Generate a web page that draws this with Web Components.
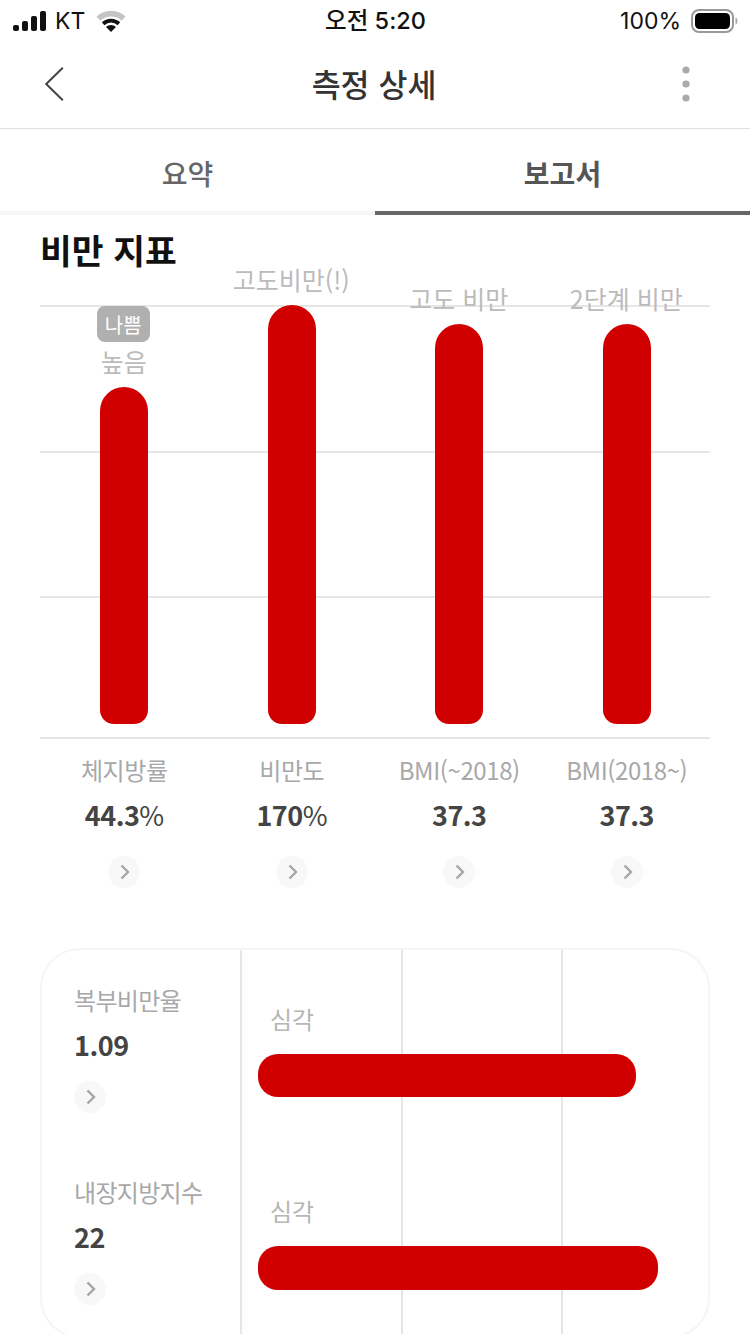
<!DOCTYPE html>
<html lang="ko">
<head>
<meta charset="utf-8">
<title>측정 상세</title>
<style>
	html, body {
		margin: 0;
		padding: 0;
		background: #fff;
		height: 1334px;
		overflow: hidden;
		font-family: "Noto Sans CJK KR", "Noto Sans", sans-serif;
	}
</style>
</head>
<body>
<status-bar></status-bar>
<nav-header>측정 상세</nav-header>
<tab-bar></tab-bar>
<index-chart heading="비만 지표">
	<chart-column top="387" note="높음" badge="나쁨" name="체지방률" value="44.3" unit="%"></chart-column>
	<chart-column top="305" note="고도비만(!)" name="비만도" value="170" unit="%"></chart-column>
	<chart-column top="324" note="고도 비만" name="BMI(~2018)" value="37.3"></chart-column>
	<chart-column top="324" note="2단계 비만" name="BMI(2018~)" value="37.3"></chart-column>
</index-chart>
<range-card>
	<range-row name="복부비만율" value="1.09" note="심각" width="378" thick="43"></range-row>
	<range-row name="내장지방지수" value="22" note="심각" width="400" thick="44"></range-row>
</range-card>

<script>
class StatusBar extends HTMLElement {
	constructor() {
		super();
		this.attachShadow({ mode: "open" });
	}

	connectedCallback() {
		this.shadowRoot.innerHTML = `
			<style>
				:host {
					display: grid;
					grid-template-columns: 1fr auto 1fr;
					align-items: center;
					height: 41px;
					padding: 0 12px 1px 13px;
					font-family: Inter, "Noto Sans CJK KR", sans-serif;
					font-size: 23px;
					color: #111;
				}
				.left, .right { display: flex; align-items: center; }
				.right { justify-content: flex-end; }
				.carrier { margin: 0 11px 0 9px; }
				.clock { font-weight: 500; font-size: 23.5px; margin-bottom: 3px; }
				.pct { margin-right: 10px; }
				svg { display: block; }
			</style>
			<div class="left">
				<svg width="33" height="20" viewBox="0 0 33 20">
					<rect x="0" y="14" width="6" height="6" rx="2" fill="#111"/>
					<rect x="9" y="10" width="6" height="10" rx="2" fill="#111"/>
					<rect x="18" y="5" width="6" height="15" rx="2" fill="#111"/>
					<rect x="27" y="0" width="6" height="20" rx="2" fill="#111"/>
				</svg>
				<span class="carrier">KT</span>
				<svg width="30" height="22" viewBox="0 0 30 22">
					<path d="M0.5 6.6 A21 21 0 0 1 29.5 6.6 L25.6 10.8 A15.5 15.5 0 0 0 4.4 10.8 Z" fill="#c4c4c4"/>
					<path d="M5.8 12.3 A13.5 13.5 0 0 1 24.2 12.3 L21.6 15.2 A9.6 9.6 0 0 0 8.4 15.2 Z" fill="#111"/>
					<path d="M10 17 A7.2 7.2 0 0 1 20 17 L15 22 Z" fill="#111"/>
				</svg>
			</div>
			<div class="clock">오전 5:20</div>
			<div class="right">
				<span class="pct">100%</span>
				<svg width="47" height="24" viewBox="0 0 47 24">
					<rect x="1" y="1" width="41" height="22" rx="7" fill="none" stroke="#999" stroke-width="2"/>
					<rect x="4" y="4" width="35" height="16" rx="4.5" fill="#000"/>
					<path d="M44.5 8.5 C46 9 46.5 10.5 46.5 12 C46.5 13.5 46 15 44.5 15.5 Z" fill="#aaa"/>
				</svg>
			</div>
		`;
	}
}

class NavHeader extends HTMLElement {
	constructor() {
		super();
		this.attachShadow({ mode: "open" });
	}

	connectedCallback() {
		this.shadowRoot.innerHTML = `
			<style>
				:host {
					display: flex;
					align-items: center;
					justify-content: space-between;
					height: 84px;
					padding: 0 60px 2px 45px;
					border-bottom: 1px solid #e0e0e0;
				}
				.title {
					font-size: 31.5px;
					font-weight: 500;
					color: #333;
					line-height: 40px;
					padding: 0 0 2px 2px;
				}
				svg { display: block; }
			</style>
			<svg width="19" height="34" viewBox="0 0 19 34">
				<path d="M17.8 0.7 L1.2 17 L17.8 33.3" fill="none" stroke="#444" stroke-width="2"/>
			</svg>
			<div class="title"><slot></slot></div>
			<svg width="8" height="36" viewBox="0 0 8 36">
				<circle cx="4" cy="4" r="3.6" fill="#aaa"/>
				<circle cx="4" cy="18" r="3.6" fill="#aaa"/>
				<circle cx="4" cy="32" r="3.6" fill="#aaa"/>
			</svg>
		`;
	}
}

class TabBar extends HTMLElement {
	constructor() {
		super();
		this.attachShadow({ mode: "open" });
	}

	connectedCallback() {
		this.shadowRoot.innerHTML = `
			<style>
				:host {
					display: grid;
					grid-template-columns: 1fr 1fr;
					height: 86px;
				}
				.tab {
					display: flex;
					align-items: center;
					justify-content: center;
					box-sizing: border-box;
					padding-top: 6px;
					font-size: 28px;
					font-weight: 500;
					color: #666;
					border-bottom: 4px solid #f6f6f6;
				}
				.active {
					font-weight: 700;
					color: #555;
					border-bottom-color: #666;
				}
			</style>
			<div class="tab">요약</div>
			<div class="tab active">보고서</div>
		`;
	}
}

class ChevronButton extends HTMLElement {
	constructor() {
		super();
		this.attachShadow({ mode: "open" });
	}

	connectedCallback() {
		this.shadowRoot.innerHTML = `
			<style>
				:host {
					display: flex;
					align-items: center;
					justify-content: center;
					width: 32px;
					height: 32px;
					border-radius: 50%;
					background: #f8f8f8;
				}
				svg { display: block; margin-left: 2px; }
			</style>
			<svg width="10" height="16" viewBox="0 0 10 16">
				<path d="M1.5 1.5 L8 8 L1.5 14.5" fill="none" stroke="#a5a5a5" stroke-width="2.4"/>
			</svg>
		`;
	}
}

class ChartColumn extends HTMLElement {
	constructor() {
		super();
		this.attachShadow({ mode: "open" });
	}

	connectedCallback() {
		const top = Number(this.getAttribute("top"));
		const badge = this.getAttribute("badge");
		this.shadowRoot.innerHTML = `
			<style>
				:host {
					display: flex;
					flex-direction: column;
					align-items: center;
					justify-content: flex-end;
					padding-left: 1px;
					min-height: 0;
				}
				.badge {
					display: flex;
					flex: none;
					align-items: center;
					justify-content: center;
					width: 53px;
					height: 36px;
					border-radius: 8px;
					background: #b0b0b0;
					color: #fff;
					font-size: 20px;
					margin: 0 2px 2px 0;
				}
				.note {
					flex: none;
					font-size: 25px;
					line-height: 34px;
					color: #bbb;
					white-space: nowrap;
					margin: 0 1px 9px 0;
				}
				.bar {
					flex: none;
					width: 48px;
					height: ${724 - top}px;
					background: #d00000;
					border-radius: 24px 24px 14px 14px;
				}
			</style>
			${badge ? `<div class="badge">${badge}</div>` : ""}
			<div class="note">${this.getAttribute("note")}</div>
			<div class="bar"></div>
		`;
	}
}

class IndexChart extends HTMLElement {
	constructor() {
		super();
		this.attachShadow({ mode: "open" });
	}

	connectedCallback() {
		const columns = [...this.querySelectorAll("chart-column")];
		const unitOf = (c) => c.getAttribute("unit") || "";
		const foot = columns.map((c) => `
			<div class="foot">
				<div class="name">${c.getAttribute("name")}</div>
				<div class="value">${c.getAttribute("value")}<span class="unit">${unitOf(c)}</span></div>
				<chevron-button></chevron-button>
			</div>
		`).join("");
		this.shadowRoot.innerHTML = `
			<style>
				:host {
					display: block;
					padding: 0 40px;
				}
				h2 {
					margin: 0;
					font-size: 34.5px;
					font-weight: 700;
					line-height: 46px;
					color: #111;
					padding-top: 11px;
				}
				.plot {
					position: relative;
					height: 418px;
					margin-top: 34px;
					padding-bottom: 13px;
					display: grid;
					grid-template-columns: repeat(4, 1fr);
					grid-template-rows: 418px;
					border-bottom: 2px solid #e6e6e6;
				}
				.line {
					position: absolute;
					left: 0;
					right: 0;
					height: 2px;
					background: #e6e6e6;
				}
				::slotted(chart-column) { position: relative; }
				.feet {
					display: grid;
					grid-template-columns: repeat(4, 1fr);
				}
				.foot {
					display: flex;
					flex-direction: column;
					align-items: center;
					padding-left: 1px;
				}
				.name {
					font-size: 24px;
					line-height: 34px;
					color: #a8a8a8;
					margin-top: 14px;
					letter-spacing: -0.4px;
				}
				.value {
					font-size: 27px;
					font-weight: 700;
					line-height: 36px;
					color: #444;
					margin-top: 10px;
					letter-spacing: -0.5px;
				}
				.unit { font-weight: 400; }
				chevron-button { margin-top: 23px; }
			</style>
			<h2>${this.getAttribute("heading")}</h2>
			<div class="plot">
				<div class="line" style="top:-1px"></div>
				<div class="line" style="top:145px"></div>
				<div class="line" style="top:290px"></div>
				<slot></slot>
			</div>
			<div class="feet">${foot}</div>
		`;
	}
}

class RangeRow extends HTMLElement {
	constructor() {
		super();
		this.attachShadow({ mode: "open" });
	}

	connectedCallback() {
		this.shadowRoot.innerHTML = `
			<style>
				:host {
					display: grid;
					grid-template-columns: 200px 1fr;
					height: 192px;
				}
				.info { padding: 33px 0 0 32px; }
				.name {
					font-size: 24px;
					line-height: 34px;
					color: #a8a8a8;
					letter-spacing: -0.7px;
				}
				.value {
					font-size: 27px;
					font-weight: 700;
					line-height: 36px;
					color: #444;
					margin-top: 10px;
					letter-spacing: -0.5px;
				}
				chevron-button { margin-top: 18px; }
				.range { padding: 52px 0 0 16px; }
				.note {
					font-size: 24px;
					line-height: 34px;
					color: #b6b6b6;
					margin-left: 12px;
				}
				.bar {
					width: ${this.getAttribute("width")}px;
					height: ${this.getAttribute("thick")}px;
					margin-top: 18px;
					border-radius: 20px;
					background: #d00000;
				}
			</style>
			<div class="info">
				<div class="name">${this.getAttribute("name")}</div>
				<div class="value">${this.getAttribute("value")}</div>
				<chevron-button></chevron-button>
			</div>
			<div class="range">
				<div class="note">${this.getAttribute("note")}</div>
				<div class="bar"></div>
			</div>
		`;
	}
}

class RangeCard extends HTMLElement {
	constructor() {
		super();
		this.attachShadow({ mode: "open" });
	}

	connectedCallback() {
		this.shadowRoot.innerHTML = `
			<style>
				:host {
					display: block;
					position: relative;
					box-sizing: border-box;
					width: 670px;
					height: 390px;
					margin: 60px 0 0 40px;
					border: 2px solid #f5f5f5;
					border-radius: 40px;
				}
				.line {
					position: absolute;
					top: 0;
					bottom: 0;
					width: 2px;
					background: #e6e6e6;
				}
				::slotted(range-row) { position: relative; }
			</style>
			<div class="line" style="left:198px"></div>
			<div class="line" style="left:359px"></div>
			<div class="line" style="left:519px"></div>
			<slot></slot>
		`;
	}
}

customElements.define("status-bar", StatusBar);
customElements.define("nav-header", NavHeader);
customElements.define("tab-bar", TabBar);
customElements.define("chevron-button", ChevronButton);
customElements.define("chart-column", ChartColumn);
customElements.define("index-chart", IndexChart);
customElements.define("range-row", RangeRow);
customElements.define("range-card", RangeCard);
</script>
</body>
</html>
